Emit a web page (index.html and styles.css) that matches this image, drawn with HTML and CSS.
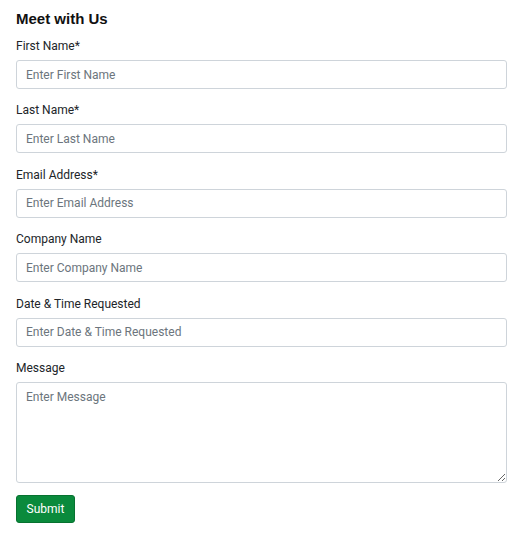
FILE: index.html
```html
<!DOCTYPE html>
<html>
<head>
<meta charset="utf-8">
<link rel="stylesheet" href="styles.css">
</head>
<body>
<form class="form">
  <h2 class="title">Meet with Us</h2>
  <div class="group">
    <label class="label">First Name*</label>
    <input class="input" type="text" placeholder="Enter First Name">
  </div>
  <div class="group">
    <label class="label">Last Name*</label>
    <input class="input" type="text" placeholder="Enter Last Name">
  </div>
  <div class="group">
    <label class="label">Email Address*</label>
    <input class="input" type="text" placeholder="Enter Email Address">
  </div>
  <div class="group">
    <label class="label">Company Name</label>
    <input class="input" type="text" placeholder="Enter Company Name">
  </div>
  <div class="group">
    <label class="label">Date &amp; Time Requested</label>
    <input class="input" type="text" placeholder="Enter Date &amp; Time Requested">
  </div>
  <div class="group">
    <label class="label">Message</label>
    <textarea class="input textarea" placeholder="Enter Message"></textarea>
  </div>
  <button class="submit" type="button">Submit</button>
</form>
</body>
</html>
```
FILE: styles.css
```css
html, body {
  margin: 0;
  padding: 0;
  background: #fff;
}
.form {
  padding: 10px 9px 0 16px;
  font-family: Roboto, "Liberation Sans", sans-serif;
  color: #212529;
}
.title {
  font-family: "Liberation Sans", Arial, sans-serif;
  font-weight: bold;
  font-size: 15px;
  line-height: 18px;
  margin: 0 0 9px 0;
  color: #111;
}
.group {
  display: flex;
  flex-direction: column;
  margin-bottom: 12.4px;
}
.label {
  font-size: 12px;
  line-height: 18px;
  margin-bottom: 5px;
  color: #212529;
}
.input {
  box-sizing: border-box;
  width: 100%;
  height: 29px;
  border: 1px solid #ced4da;
  border-radius: 3px;
  padding: 0 9px;
  font-family: Roboto, "Liberation Sans", sans-serif;
  font-size: 12px;
  color: #495057;
  background: #fff;
  margin: 0;
}
.input::placeholder {
  color: #6c757d;
}
.textarea {
  height: 101px;
  padding: 5px 9px;
  line-height: 18px;
  resize: vertical;
  display: block;
}
.submit {
  display: block;
  margin-top: 0;
  height: 28px;
  width: 59px;
  padding: 0;
  background: #0a8a3c;
  border: 1px solid #077230;
  border-radius: 3px;
  color: #fff;
  font-family: Roboto, "Liberation Sans", sans-serif;
  font-size: 12px;
}
```
